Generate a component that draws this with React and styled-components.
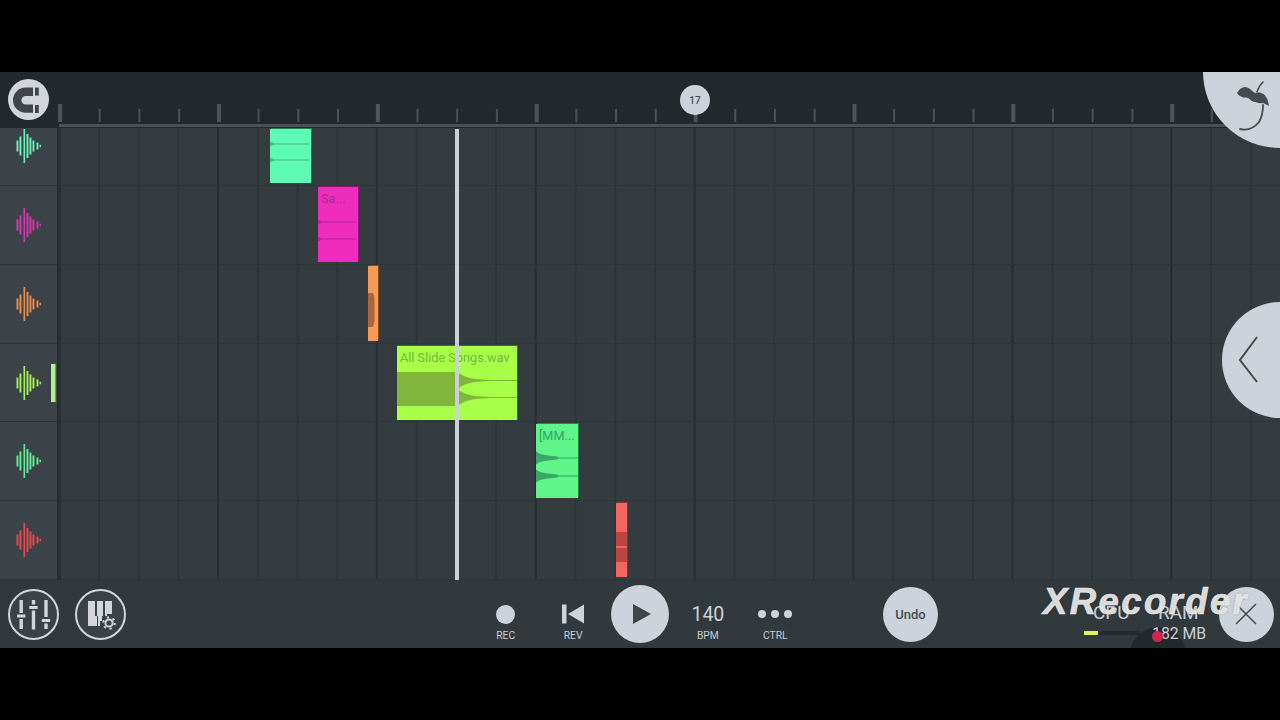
import React from 'react';
import styled, { createGlobalStyle } from 'styled-components';

const Global = createGlobalStyle`
  html, body { margin: 0; padding: 0; background: #000; }
  body { font-family: Roboto, "Liberation Sans", sans-serif; }
`;

const Page = styled.div`
  width: 1280px; height: 720px; background: #000;
  display: flex; flex-direction: column; justify-content: center; overflow: hidden;
`;
const Daw = styled.main`
  position: relative; height: 576px; display: flex; flex-direction: column; overflow: hidden;
  background: #353c3f;
`;

const Ruler = styled.header`
  height: 56px; flex: none; background: #22282b;
  display: flex; flex-direction: column; justify-content: flex-end;
`;
const Ticks = styled.div`
  height: 18px; margin-left: 58px; margin-bottom: 2px;
  background-image:
    linear-gradient(to right, #4d5557 4px, transparent 4px),
    linear-gradient(to right, #4a5254 2px, transparent 2px);
  background-size: 158.87px 100%, 39.72px 13px;
  background-position: 159px 0, 1px bottom;
  background-repeat: repeat-x;
`;
const RuleLine = styled.div`
  height: 3px; margin-left: 59px; margin-bottom: 1px; background: #4a5253;
`;
const Magnet = styled.button`
  position: absolute; left: 8px; top: 7px; width: 41px; height: 41px; padding: 0; border: 0;
  border-radius: 50%; background: #d2d6db; display: flex;
`;
const Marker = styled.div`
  position: absolute; left: 680px; top: 13px; width: 30px; height: 30px; border-radius: 50%;
  background: #cdd3da; color: #454c50; font-size: 10px; font-weight: 500;
  display: flex; align-items: center; justify-content: center;
`;
const LogoCorner = styled.div`
  position: absolute; right: 0; top: 0; width: 77px; height: 76px;
  background: #cdd3da; border-bottom-left-radius: 77px 76px;
`;
const SideTab = styled.button`
  position: absolute; right: 0; top: 230px; width: 58px; height: 116px; padding: 0; border: 0;
  background: #cdd3da; border-radius: 58px 0 0 58px; display: flex;
`;

const Tracks = styled.section`
  position: relative; height: 452px; flex: none; display: flex; flex-direction: column;
`;
const Row = styled.div`
  height: ${p => p.$h}px; flex: none; display: flex;
`;
const Head = styled.div`
  position: relative; width: 57px; flex: none; background: #3c4348; border-bottom: 1px solid #2f3639;
  box-sizing: border-box; display: flex; align-items: ${p => (p.$top ? 'flex-start' : 'center')}; padding-left: 16px;
`;
const Divider = styled.div`
  width: 4px; flex: none; background: #282e31;
`;
const Lane = styled.div`
  position: relative; flex: 1; box-sizing: border-box; border-bottom: 1px solid #2f3639;
  background-color: #353c3f;
  background-image:
    linear-gradient(to right, #282f31 2px, transparent 2px),
    linear-gradient(to right, #2e3537 2px, transparent 2px);
  background-size: 158.87px 100%, 39.72px 100%;
  background-position: 156px 0, 37px 0;
`;
const Meter = styled.div`
  position: absolute; left: 51px; top: 20px; width: 4px; height: 38px;
  background: #b4ee8e; box-shadow: 1px 0 1px #5fc41e;
`;
const Clip = styled.div`
  position: absolute; left: ${p => p.$x}px; top: ${p => p.$y}px; width: ${p => p.$w}px; height: ${p => p.$h}px;
  background: ${p => p.$bg}; color: ${p => p.$fg}; box-shadow: 1px -1px 0 ${p => p.$edge};
  font-size: 12.7px; line-height: 14px; white-space: nowrap; overflow: hidden;
`;
const ClipName = styled.span`
  position: absolute; left: 3px; top: 5px;
`;
const ClipWave = styled.svg`
  position: absolute; left: 0; top: 0; width: 100%; height: 100%;
`;
const Playhead = styled.div`
  position: absolute; left: 455px; top: 1px; bottom: 0; width: 4px; background: #c9d0d7;
`;

const Bottom = styled.footer`
  height: 68px; flex: none; background: #32393c; display: grid;
  grid-template-columns: 472px 337px 74px 55px 281px 1fr; align-items: center;
  box-sizing: border-box;
`;
const LeftTools = styled.div`
  display: flex; gap: 16px; padding-left: 8px;
`;
const RoundOutline = styled.button`
  width: 51px; height: 51px; padding: 0; box-sizing: border-box; border: 2px solid #d2d6db;
  border-radius: 50%; background: #3b4246; display: flex;
`;
const Transport = styled.div`
  display: grid; grid-template-columns: repeat(5, 67.4px); align-items: center; justify-items: center;
`;
const Control = styled.div`
  display: flex; flex-direction: column; align-items: center; height: 56px; box-sizing: border-box;
  padding-top: 13px;
`;
const ControlBody = styled.div`
  height: 30px; display: flex; align-items: center; justify-content: center;
  color: #cbd2d9; font-size: 19.5px;
`;
const Label = styled.span`
  color: #c7ced5; font-size: 10.3px; line-height: 13px;
`;
const RecDot = styled.span`
  width: 19px; height: 19px; border-radius: 50%; background: #cdd3da;
`;
const Dots = styled.span`
  display: flex; gap: 5px;
`;
const Dot = styled.i`
  width: 8px; height: 8px; border-radius: 50%; background: #cdd3da;
`;
const Play = styled.button`
  width: 58px; height: 58px; padding: 0; border: 0; border-radius: 50%; background: #cdd3da; display: flex;
`;
const Undo = styled.button`
  grid-column: 4; width: 55px; height: 55px; padding: 0; border: 0; border-radius: 50%;
  background: #cdd3da; color: #454c50; font: 500 13px Roboto, sans-serif;
`;
const Stats = styled.div`
  position: relative; grid-column: 5; height: 68px; overflow: hidden;
`;
const StatText = styled.span`
  position: absolute; left: ${p => p.$x}px; top: ${p => p.$y}px; color: #c9d0d7;
  font-size: ${p => p.$fs}px; line-height: 20px; white-space: nowrap;
`;
const MeterTrack = styled.div`
  position: absolute; left: 146px; top: 51px; width: 56px; height: 4px; background: #252b2e;
`;
const MeterFill = styled.div`
  width: 14px; height: 100%; background: #e3f05a;
`;
const TouchHalo = styled.div`
  position: absolute; left: 192px; top: 47px; width: 56px; height: 56px; border-radius: 50%;
  background: rgba(30, 35, 38, .75);
`;
const TouchDot = styled.div`
  position: absolute; left: 214px; top: 51px; width: 11px; height: 11px; border-radius: 50%; background: #d0254f;
`;
const Close = styled.button`
  justify-self: start; width: 55px; height: 55px; padding: 0; border: 0; border-radius: 50%;
  background: #cdd3da; display: flex;
`;
const Watermark = styled.div`
  position: absolute; left: 1043px; top: 510px; color: rgba(236, 236, 236, .93);
  font: italic 700 36.5px/40px "Liberation Sans", Arial, sans-serif; letter-spacing: 2.4px;
  -webkit-text-stroke: .7px rgba(236, 236, 236, .93);
  text-shadow: 0 0 2px rgba(40, 40, 40, .5); white-space: nowrap;
`;

const bars = [[0, 11], [3, 19], [7, 34], [10, 24], [13, 17], [16, 11], [20, 7], [23, 2.5]];
const WaveIcon = ({ color }) => (
  <svg width="25" height="36" viewBox="0 0 25 36" fill={color}>
    {bars.map(([x, h]) => <rect key={x} x={x + 0.5} y={18 - h / 2} width={x === 7 ? 1.6 : 1.9} height={h} />)}
  </svg>
);

const rows = [
  { h: 58, color: '#6af0b8' },
  { h: 79, color: '#d838ae' },
  { h: 79, color: '#ea8d4c' },
  { h: 78, color: '#a4ef58' },
  { h: 79, color: '#62ee96' },
  { h: 79, color: '#e54c50' },
];

const Hairlines = ({ w, h, ys, color }) => (
  <ClipWave viewBox={`0 0 ${w} ${h}`} preserveAspectRatio="none">
    {ys.map(y => (
      <path key={y} d={`M0 ${y - 2} L5 ${y - .4} H${w - 2} V${y + .4} H5 L0 ${y + 2} Z`} fill={color} />
    ))}
  </ClipWave>
);

const lobe = (cy, profile, end) => {
  const top = profile.map(([x, r]) => `${x} ${cy - r}`);
  const bottom = [...profile].reverse().map(([x, r]) => `${x} ${cy + r}`);
  return `M${top.join('L')}L${end} ${cy - .5}V${cy + .5}L${bottom.join('L')}Z`;
};
const longProfile = [[60, 8.500], [64, 6], [68, 4], [73, 2.500], [78, 1.500], [93, .6]];
const shortProfile = [[0, 6.500], [4, 4], [10, 2.800], [21, 1.500], [23, .5]];

export default function App() {
  return (
    <Page>
      <Global />
      <Daw>
        <Ruler>
          <Ticks />
          <RuleLine />
        </Ruler>
        <Magnet aria-label="snap">
          <svg width="41" height="41" viewBox="0 0 41 41" fill="none">
            <path d="M25 12.8H17.6a8.4 8.4 0 0 0 0 16.8H25" stroke="#3f464a" strokeWidth="8.4" />
            <rect x="27" y="8.6" width="3.8" height="8" fill="#3f464a" />
            <rect x="27" y="26" width="3.8" height="8" fill="#3f464a" />
          </svg>
        </Magnet>
        <Marker>17</Marker>

        <Tracks>
          {rows.map((r, i) => (
            <Row key={i} $h={r.h}>
              <Head $top={i === 0}>
                <WaveIcon color={r.color} />
                {i === 3 && <Meter />}
              </Head>
              <Divider />
              <Lane>
                {i === 0 && (
                  <Clip $x={209} $y={1} $w={41} $h={54} $bg="#5dfbb5" $edge="#1c7f58">
                    <Hairlines w={41} h={54} ys={[15, 31]} color="#52b58c" />
                  </Clip>
                )}
                {i === 1 && (
                  <Clip $x={257} $y={1} $w={40} $h={75} $bg="#ee2dbf" $edge="#8d1a70" $fg="#a92a93">
                    <ClipName>Sa...</ClipName>
                    <Hairlines w={40} h={75} ys={[35, 52]} color="#b42496" />
                  </Clip>
                )}
                {i === 2 && (
                  <Clip $x={307} $y={1} $w={10} $h={75} $bg="#f59a57" $edge="#8a4a1c">
                    <ClipWave viewBox="0 0 10 75" preserveAspectRatio="none">
                      <path d="M0 27H5L6.500 32V55L5 61H0Z" fill="#a8663c" />
                    </ClipWave>
                  </Clip>
                )}
                {i === 3 && (
                  <Clip $x={336} $y={2} $w={120} $h={74} $bg="#a7ff47" $edge="#2e7a17" $fg="#75b83b">
                    <ClipName>All Slide Songs.wav</ClipName>
                    <ClipWave viewBox="0 0 120 74" preserveAspectRatio="none">
                      <path d="M0 26H60V60H0Z" fill="#7fb63b" />
                      <path d={lobe(34.500, longProfile, 120)} fill="#7fb63b" />
                      <path d={lobe(51.500, longProfile, 120)} fill="#7fb63b" />
                    </ClipWave>
                  </Clip>
                )}
                {i === 4 && (
                  <Clip $x={475} $y={2} $w={42} $h={74} $bg="#5ff58b" $edge="#1e8a45" $fg="#35a766">
                    <ClipName>[MM...</ClipName>
                    <ClipWave viewBox="0 0 42 74" preserveAspectRatio="none">
                      <path d={lobe(34, shortProfile, 42)} fill="#3aa668" />
                      <path d={lobe(52, shortProfile, 42)} fill="#3aa668" />
                    </ClipWave>
                  </Clip>
                )}
                {i === 5 && (
                  <Clip $x={555} $y={2} $w={11} $h={74} $bg="#f3645c" $edge="#9c2a25">
                    <ClipWave viewBox="0 0 11 74" preserveAspectRatio="none">
                      <path d="M0 29H11V43H0ZM0 45H11V59H0Z" fill="#b9463f" />
                    </ClipWave>
                  </Clip>
                )}
              </Lane>
            </Row>
          ))}
          <Playhead />
        </Tracks>

        <Bottom>
          <LeftTools>
            <RoundOutline aria-label="mixer">
              <svg width="47" height="47" viewBox="0 0 47 47" fill="#d2d6db">
                <rect x="9.500" y="9" width="3.400" height="13" />
                <rect x="7" y="23.500" width="8.400" height="3" />
                <rect x="9.500" y="28" width="3.400" height="10" />
                <rect x="21.800" y="9" width="3.400" height="4.500" />
                <rect x="19.300" y="15" width="8.400" height="3" />
                <rect x="21.800" y="19.500" width="3.400" height="19" />
                <rect x="34.300" y="9" width="3.400" height="17" />
                <rect x="31.800" y="28" width="8.400" height="3" />
                <rect x="34.300" y="32.500" width="3.400" height="5.500" />
              </svg>
            </RoundOutline>
            <RoundOutline aria-label="piano settings">
              <svg width="47" height="47" viewBox="0 0 47 47" fill="none">
                <path d="M11 10H18V25H20V35H11ZM20 10H26V25H25V30H23V35H21V25H20ZM28 10H35V23H30V25H28Z" fill="#d2d6db" />
                <circle cx="32" cy="32" r="3.600" stroke="#d2d6db" strokeWidth="2" />
                <circle cx="32" cy="32" r="5.800" stroke="#d2d6db" strokeWidth="2" strokeDasharray="2.200 3.900" />
              </svg>
            </RoundOutline>
          </LeftTools>

          <Transport>
            <Control><ControlBody><RecDot /></ControlBody><Label>REC</Label></Control>
            <Control>
              <ControlBody>
                <svg width="24" height="20" viewBox="0 0 24 20" fill="#cdd3da">
                  <rect x="1" y="0.500" width="4.500" height="19" />
                  <path d="M23 0.500V19.500L7 10Z" />
                </svg>
              </ControlBody>
              <Label>REV</Label>
            </Control>
            <Play aria-label="play">
              <svg width="58" height="58" viewBox="0 0 58 58" fill="#3f464a">
                <path d="M22 19V39L40 29Z" />
              </svg>
            </Play>
            <Control><ControlBody>140</ControlBody><Label>BPM</Label></Control>
            <Control>
              <ControlBody><Dots><Dot /><Dot /><Dot /></Dots></ControlBody>
              <Label>CTRL</Label>
            </Control>
          </Transport>

          <Undo>Undo</Undo>

          <Stats>
            <StatText $x={155} $y={23} $fs={19}>CPU</StatText>
            <StatText $x={220} $y={23} $fs={19}>RAM</StatText>
            <MeterTrack><MeterFill /></MeterTrack>
            <TouchHalo />
            <StatText $x={214} $y={44} $fs={15.8}>182 MB</StatText>
            <TouchDot />
          </Stats>

          <Close aria-label="close">
            <svg width="55" height="55" viewBox="0 0 55 55" fill="none" stroke="#444b4f" strokeWidth="1.500">
              <path d="M17 17L37 37M37 17L17 37" />
            </svg>
          </Close>
        </Bottom>

        <LogoCorner>
          <svg width="77" height="76" viewBox="0 0 77 76" fill="none">
            <path d="M34 21C36 17 39 15 42 15C46 15 49 19 52 21C54 21 56 20 58 21C62 22 65 26 66 34C64 33 61 31 59 31C56 32 54 30 52 30C49 30 47 27 45 26C43 25 41 26 39 25C37 24 35 23 34 21Z" fill="#454c50" />
            <path d="M60 33C60 40 59 45 56 50C52 55 46 59 37 57" stroke="#454c50" strokeWidth="1.800" strokeLinecap="round" />
            <path d="M54 20C55 16 57 13 60 10" stroke="#454c50" strokeWidth="1.500" strokeLinecap="round" />
          </svg>
        </LogoCorner>
        <SideTab aria-label="open panel">
          <svg width="58" height="116" viewBox="0 0 58 116" fill="none" stroke="#424a4e" strokeWidth="2">
            <path d="M35 35L18 58L35 80" />
          </svg>
        </SideTab>
        <Watermark>XRecorder</Watermark>
      </Daw>
    </Page>
  );
}
